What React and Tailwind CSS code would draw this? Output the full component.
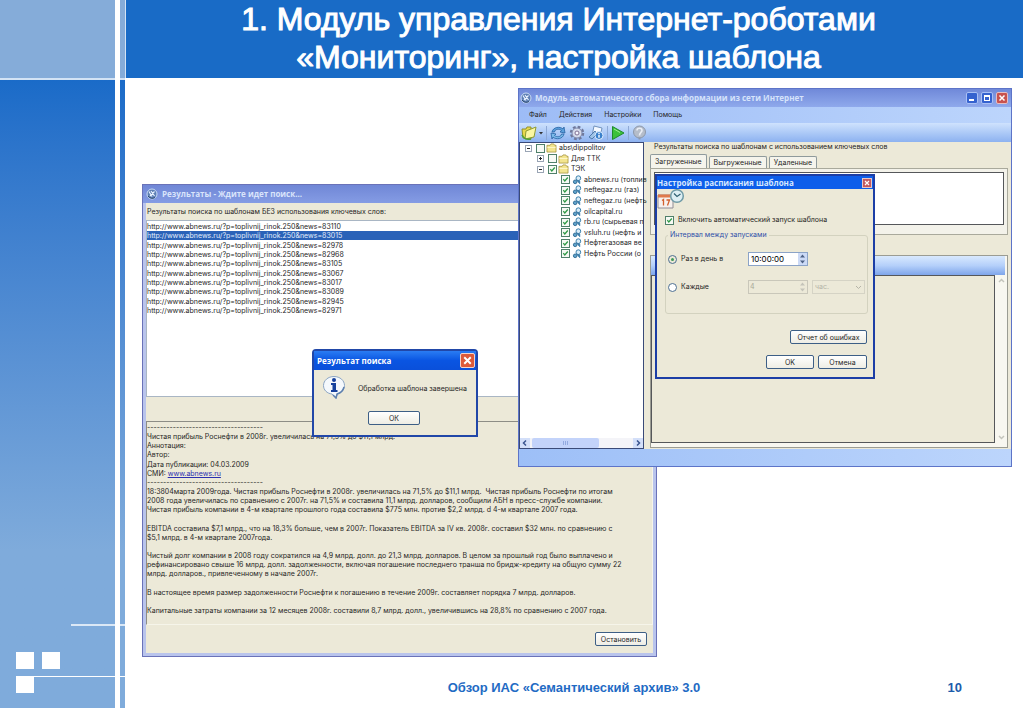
import React from "react";

const NEWS_IDS = ["83110", "83015", "82978", "82968", "83105", "83067", "83017", "83089", "82945", "82971"];

const DASHES = "------------------------------------";

const ARTICLE = [
  DASHES,
  "Чистая прибыль Роснефти в 2008г. увеличилась на 71,5% до $11,1 млрд.",
  "Аннотация:",
  "Автор:",
  "Дата публикации: 04.03.2009",
  { label: "СМИ: ", source: "www.abnews.ru" },
  DASHES,
  "18:3804марта 2009года. Чистая прибыль Роснефти в 2008г. увеличилась на 71,5% до $11,1 млрд.  Чистая прибыль Роснефти по итогам",
  "2008 года увеличилась по сравнению с 2007г. на 71,5% и составила 11,1 млрд. долларов, сообщили АБН в пресс-службе компании.",
  "Чистая прибыль компании в 4-м квартале прошлого года составила $775 млн. против $2,2 млрд. d 4-м квартале 2007 года.",
  "",
  "EBITDA составила $7,1 млрд., что на 18,3% больше, чем в 2007г. Показатель EBITDA за IV кв. 2008г. составил $32 млн. по сравнению с",
  "$5,1 млрд. в 4-м квартале 2007года.",
  "",
  "Чистый долг компании в 2008 году сократился на 4,9 млрд. долл. до 21,3 млрд. долларов. В целом за прошлый год было выплачено и",
  "рефинансировано свыше 16 млрд. долл. задолженности, включая погашение последнего транша по бридж-кредиту на общую сумму 22",
  "млрд. долларов., привлеченному в начале 2007г.",
  "",
  "В настоящее время размер задолженности Роснефти к погашению в течение 2009г. составляет порядка 7 млрд. долларов.",
  "",
  "Капитальные затраты компании за 12 месяцев 2008г. составили 8,7 млрд. долл., увеличившись на 28,8% по сравнению с 2007 года.",
];

const SITES = [
  "abnews.ru (топлив",
  "neftegaz.ru (газ)",
  "neftegaz.ru (нефть",
  "oilcapital.ru",
  "rb.ru (сырьевая п",
  "vsluh.ru (нефть и",
  "Нефтегазовая ве",
  "Нефть России (о",
];

function AppIcon() {
  return (
    <svg viewBox="0 0 12 12" className="size-3 shrink-0" aria-hidden="true">
      <circle cx="6" cy="6" r="5" fill="#5d7fb4" stroke="#c9dcf5" />
      <path d="M3 3.500l3 5M5 3l3.500 5M8.500 3.500L4 8" stroke="#eaf3ff" strokeWidth="1.200" fill="none" />
      <path d="M2 8a5 5 0 0 0 7 1.500" stroke="#29476f" fill="none" />
    </svg>
  );
}

function CloseIcon({ className }) {
  return (
    <svg viewBox="0 0 12 12" className={className} aria-hidden="true">
      <path d="M3 3l6 6M9 3l-6 6" stroke="#fff" strokeWidth="1.800" />
    </svg>
  );
}

function CheckBox({ checked, label }) {
  return (
    <span className="relative block size-[9px] shrink-0">
      <input
        type="checkbox"
        aria-label={label}
        defaultChecked={checked}
        className="peer block size-[9px] appearance-none border border-[#4f806a] bg-[#f7faf5]"
      />
      <svg viewBox="0 0 9 9" className="pointer-events-none absolute inset-0 hidden size-[9px] peer-checked:block" aria-hidden="true">
        <path d="M2.300 4.200l1.500 1.800 3-3.500" stroke="#2f9a46" strokeWidth="1.300" fill="none" />
      </svg>
    </span>
  );
}

function Folder() {
  return (
    <svg viewBox="0 0 12 11" className="h-2.5 w-[11px] shrink-0" aria-hidden="true">
      <path d="M1 2.500h3.500l1-1.500h3l1 1.500h1.500v7.500h-10z" fill="#f3e58f" stroke="#a08d35" strokeWidth=".8" />
      <path d="M1.500 5h9" stroke="#fff8cc" />
    </svg>
  );
}

function Expander({ open }) {
  return (
    <svg viewBox="0 0 7 7" className="mr-[3px] size-[7px] shrink-0" aria-hidden="true">
      <rect x=".5" y=".5" width="6" height="6" fill="#fff" stroke="#9aa5b5" />
      <path d={open ? "M2 3.500h3" : "M2 3.500h3M3.500 2v3"} stroke="#222" />
    </svg>
  );
}

function SiteIcon() {
  return (
    <svg viewBox="0 0 10 11" className="h-2.5 w-2.5 shrink-0" aria-hidden="true">
      <circle cx="6.500" cy="3.500" r="2.600" fill="#d9ecf8" stroke="#2f78a6" />
      <circle cx="3" cy="7.500" r="2" fill="#5fa3cc" stroke="#2a668f" />
      <path d="M5 6l3 3.500v-3z" fill="#3a7ca8" stroke="#3a7ca8" />
    </svg>
  );
}

function ToolIcons() {
  return (
    <>
      <button type="button" aria-label="Открыть" className="flex items-center">
        <svg viewBox="0 0 22 16" className="h-4 w-[22px]" aria-hidden="true">
          <path d="M1 4h4l1-2h4v12l-8-1z" fill="#e8d94c" stroke="#93922b" />
          <path d="M5 6l10-4-2 10-9 2z" fill="#fbf7a2" stroke="#8f9a32" />
          <path d="M1 10c2 4 5 5 9 4" stroke="#4aa23a" strokeWidth="1.500" fill="none" />
          <path d="M18 7h4l-2 2.500z" fill="#333" />
        </svg>
      </button>
      <span className="mx-[3px] h-3.5 w-px bg-[#8ea9d6]" />
      <button type="button" aria-label="Обновить">
        <svg viewBox="0 0 16 16" className="size-4" aria-hidden="true">
          <path d="M2 7c1-5 8-6 11-3l1-2 1 6-5-1 1.500-1.500C9 3.500 5 4 4.500 7z" fill="#5ba0dc" stroke="#2763a4" strokeWidth=".8" />
          <path d="M14 9c-1 5-8 6-11 3l-1 2-1-6 5 1-1.500 1.500c2.500 2 6.500 1.500 7-1.500z" fill="#7bbbe9" stroke="#2763a4" strokeWidth=".8" />
        </svg>
      </button>
      <button type="button" aria-label="Параметры" className="ml-[3px]">
        <svg viewBox="0 0 16 16" className="size-4" aria-hidden="true">
          <circle cx="8" cy="8" r="6" fill="none" stroke="#6f789b" strokeWidth="2.500" strokeDasharray="2.700 2" />
          <circle cx="8" cy="8" r="5" fill="#d5daea" stroke="#7d86a8" />
          <circle cx="8" cy="8" r="2" fill="#f7f8ff" stroke="#806e92" />
        </svg>
      </button>
      <button type="button" aria-label="Сведения" className="ml-[3px]">
        <svg viewBox="0 0 16 16" className="size-4" aria-hidden="true">
          <path d="M6 1l8 2-2 9-8-1z" fill="#f4f9ff" stroke="#7192bd" />
          <path d="M1 12l6-6 2 3-5 5z" fill="#9fc3e7" stroke="#4f7bab" />
          <circle cx="11" cy="10.500" r="4" fill="#3a80cb" stroke="#e0efff" />
          <path d="M11 9.800v3M11 7.800v1.200" stroke="#fff" strokeWidth="1.400" />
        </svg>
      </button>
      <span className="mx-[3px] h-3.5 w-px bg-[#8ea9d6]" />
      <button type="button" aria-label="Запуск">
        <svg viewBox="0 0 14 16" className="h-4 w-3.5" aria-hidden="true">
          <path d="M1.500 1.500L13 8 1.500 14.500z" fill="#3cc13c" stroke="#1f8a2c" />
          <path d="M3 4l6 3.500" stroke="#9bee8f" />
        </svg>
      </button>
      <span className="mx-[3px] h-3.5 w-px bg-[#8ea9d6]" />
      <button type="button" aria-label="Остановка">
        <svg viewBox="0 0 15 16" className="h-4 w-[15px]" aria-hidden="true">
          <circle cx="7.500" cy="7" r="6" fill="#b5bdca" stroke="#8d98aa" />
          <path d="M5 5.500c0-3 5-3 5 0 0 2-2.500 2-2.500 5" stroke="#e9edf4" strokeWidth="1.600" fill="none" />
          <path d="M6.500 12.500h2v2h-2z" fill="#8d98aa" />
        </svg>
      </button>
    </>
  );
}

function PushButton({ children, className }) {
  return (
    <button
      type="button"
      className={
        "h-3.5 rounded-[2px] border border-[#3d5f86] bg-gradient-to-b from-white to-[#eeede4] text-[7px] leading-[11px] whitespace-nowrap " +
        className
      }
    >
      {children}
    </button>
  );
}

function ResultsWindow() {
  return (
    <section className="absolute top-[106px] left-[17px] flex h-[473px] w-[515px] flex-col border border-[#6a72b8] bg-[#b9c4ec] px-[3px] pb-[3px]">
      <h2 className="-mx-[3px] flex h-[18px] items-center gap-1 bg-gradient-to-b from-[#7087d6] to-[#859ce4] px-[3px] font-['Open_Sans',sans-serif] text-[8px] font-bold text-[#d9e4fb]">
        <AppIcon />
        Результаты - Ждите идет поиск...
      </h2>
      <div className="flex flex-1 flex-col bg-[#ece9d8]">
        <p className="h-[17px] pl-px text-[7px] leading-[18px]">
          Результаты поиска по шаблонам БЕЗ использования ключевых слов:
        </p>
        <div className="h-[177px] border border-[#a9b6c4] bg-white pt-px">
          <ul className="flex h-[93px] flex-col justify-between">
            {NEWS_IDS.map((id, i) => (
              <li
                key={id}
                className={
                  i === 1
                    ? "h-[9px] bg-[#2a62b8] text-[7px] leading-[9px] text-[#e3edfb]"
                    : "h-[9px] text-[7px] leading-[9px]"
                }
              >
                http://www.abnews.ru/?p=toplivnij_rinok.250&amp;news={id}
              </li>
            ))}
          </ul>
        </div>
        <article className="mt-6 h-[204px] border border-t-[#8d8d86] border-r-[#f6f5ea] border-b-[#f6f5ea] border-l-[#8d8d86] pt-px">
          <div className="flex h-[192px] flex-col justify-between">
            {ARTICLE.map((line, i) => (
              <p key={i} className="h-[9px] text-[7px] leading-[9px] whitespace-pre">
                {typeof line === "string" ? (
                  line
                ) : (
                  <>
                    {line.label}
                    <a href="#abnews" className="text-[#2b2fb0] underline">
                      {line.source}
                    </a>
                  </>
                )}
              </p>
            ))}
          </div>
        </article>
        <div className="flex flex-1 items-center justify-end pr-1.5">
          <PushButton className="w-[52px]">Остановить</PushButton>
        </div>
      </div>
    </section>
  );
}

function MessageDialog() {
  return (
    <section className="absolute top-[271px] left-[187px] flex h-[88px] w-[166px] flex-col rounded-t-[4px] border-2 border-[#2147a8] bg-[#ece9d8]">
      <h2 className="flex h-[19px] items-center justify-between bg-gradient-to-b from-[#2a7cf3] via-[#0a55e2] to-[#0a50da] pr-px pl-[3px] font-['Open_Sans',sans-serif] text-[8px] font-bold text-white">
        Результат поиска
        <button type="button" aria-label="Закрыть" className="rounded-[2px] border border-[#f3d4cc] bg-[#dd5a3a]">
          <CloseIcon className="size-[13px]" />
        </button>
      </h2>
      <div className="flex items-center gap-3 pt-[5px] pl-2">
        <svg viewBox="0 0 24 24" className="size-6 shrink-0" aria-hidden="true">
          <path d="M12 1.500c6 0 10.500 4 10.500 9 0 4-3 7.500-7 8.500L14 23l-4-4C5 18.500 1.500 15 1.500 10.500c0-5 4.500-9 10.500-9z" fill="#f4f8fc" stroke="#8ba5c4" />
          <path d="M22 12c-1 4-3 6-7 7l-1 4-3-3" stroke="#5c7fae" strokeWidth="1.500" fill="none" />
          <circle cx="12" cy="5" r="2" fill="#16409c" />
          <path d="M9 8h5v7h1.500v2H9v-2h1.500v-5H9z" fill="#16409c" />
        </svg>
        <p className="pt-1 text-[7px] leading-[10px] whitespace-nowrap">Обработка шаблона завершена</p>
      </div>
      <PushButton className="mt-3 ml-[54px] w-[52px]">ОК</PushButton>
    </section>
  );
}

function MonitorWindow() {
  return (
    <section className="absolute top-[10px] left-[393px] flex h-[379px] w-[494px] flex-col border border-[#5d74c8] bg-[#a9c6fa]">
      <h2 className="flex h-[18px] shrink-0 items-center gap-[3px] bg-gradient-to-b from-[#7089d9] to-[#8fa9ec] pr-[3px] pl-px font-['Open_Sans',sans-serif] text-[8px] font-bold text-[#d6e3fb]">
        <AppIcon />
        <span className="flex-1">Модуль автоматического сбора информации из сети Интернет</span>
        <button type="button" aria-label="Свернуть" className="flex size-3 items-end rounded-[2px] border border-[#a9c0f5] bg-[#3562cf] p-[2px]">
          <span className="h-[2px] w-[5px] bg-white" />
        </button>
        <button type="button" aria-label="Развернуть" className="size-3 rounded-[2px] border border-[#a9c0f5] bg-[#3562cf] p-[2px]">
          <span className="block size-[6px] border border-t-2 border-white" />
        </button>
        <button type="button" aria-label="Закрыть" className="size-3 rounded-[2px] border border-[#e7bdc0] bg-[#c8524f]">
          <CloseIcon className="size-2.5" />
        </button>
      </h2>
      <nav className="flex h-4 shrink-0 items-center gap-3 bg-gradient-to-r from-[#9dbcf6] to-[#bcd5fc] pl-2.5 text-[7px]">
        <button type="button">Файл</button>
        <button type="button">Действия</button>
        <button type="button">Настройки</button>
        <button type="button">Помощь</button>
      </nav>
      <div className="flex h-[19px] shrink-0 items-center bg-gradient-to-b from-[#cfe2fd] to-[#8db2f0] pl-[2px]">
        <ToolIcons />
      </div>
      <div className="flex min-h-0 flex-1 bg-[#ece9d8]">
        <div className="flex w-[125px] shrink-0 flex-col justify-between border border-[#3a4a78] bg-white text-[7px] leading-[10px] whitespace-nowrap">
          <ul className="flex h-[116px] flex-col justify-between">
            <li className="flex h-2.5 items-center gap-px pl-[5px]">
              <Expander open />
              <CheckBox label="abs\dippolitov" />
              <Folder />
              <span className="ml-px">abs\dippolitov</span>
            </li>
            <li className="flex h-2.5 items-center gap-px pl-[17px]">
              <Expander />
              <CheckBox label="Для ТТК" />
              <Folder />
              <span className="ml-px">Для ТТК</span>
            </li>
            <li className="flex h-2.5 items-center gap-px pl-[17px]">
              <Expander open />
              <CheckBox checked label="ТЭК" />
              <Folder />
              <span className="ml-px">ТЭК</span>
            </li>
            {SITES.map((site) => (
              <li key={site} className="flex h-2.5 items-center gap-[2px] pl-[41px]">
                <CheckBox checked label={site} />
                <SiteIcon />
                <span>{site}</span>
              </li>
            ))}
          </ul>
          <div className="flex h-2.5 items-center bg-[#f4f4f8]">
            <svg viewBox="0 0 10 10" className="size-2.5 bg-[#d3dff9]" aria-hidden="true">
              <path d="M6 2.500L3.500 5 6 7.500" stroke="#3b5590" strokeWidth="1.500" fill="none" />
            </svg>
            <span className="ml-[2px] flex h-2.5 w-[67px] items-center justify-center gap-px rounded-[2px] bg-[#c3d3fa]">
              <i className="h-1 w-px bg-[#93aae0]" />
              <i className="h-1 w-px bg-[#93aae0]" />
              <i className="h-1 w-px bg-[#93aae0]" />
            </span>
            <span className="flex-1" />
            <svg viewBox="0 0 10 10" className="size-2.5 bg-[#d3dff9]" aria-hidden="true">
              <path d="M4 2.500L6.500 5 4 7.500" stroke="#3b5590" strokeWidth="1.500" fill="none" />
            </svg>
          </div>
        </div>
        <div className="flex flex-1 flex-col pr-[3px] pl-1.5 text-[7px]">
          <p className="h-3 pl-1 leading-[10px]">Результаты поиска по шаблонам с использованием ключевых слов</p>
          <div className="flex h-3.5 items-end gap-[2px] leading-[11px]">
            <button type="button" className="h-3.5 rounded-t-[2px] border border-b-0 border-[#8f9a9c] bg-[#f5f4ec] px-1">Загруженные</button>
            <button type="button" className="h-3 rounded-t-[2px] border border-b-0 border-[#8f9a9c] bg-[#f5f4ec] px-1">Выгруженные</button>
            <button type="button" className="h-3 rounded-t-[2px] border border-b-0 border-[#8f9a9c] bg-[#f5f4ec] px-1">Удаленные</button>
          </div>
          <div className="h-[67px] border border-[#a9a99c] bg-[#f3f2ea] px-[3px] pt-[3px]">
            <div className="h-[53px] border border-[#55575a] bg-white" />
          </div>
          <div className="mt-5 mb-px flex min-h-0 flex-1 flex-col border border-[#9b9c93] bg-[#f8f7f0]">
            <div className="mr-[2px] h-[19px] shrink-0 bg-gradient-to-b from-[#d9e9fe] via-[#b5d0fa] to-[#7fa5ea]" />
            <div className="flex min-h-0 flex-1 pb-1">
              <div className="flex-1 border border-[#55575a] bg-[#ece9d8]" />
              <div className="flex w-3 flex-col items-center justify-between py-px text-[#c4c5bd]">
                <svg viewBox="0 0 9 9" className="size-[9px]" aria-hidden="true">
                  <path d="M2 6l2.500-2.500L7 6" stroke="currentColor" strokeWidth="1.500" fill="none" />
                </svg>
                <svg viewBox="0 0 9 9" className="size-[9px]" aria-hidden="true">
                  <path d="M2 3l2.500 2.500L7 3" stroke="currentColor" strokeWidth="1.500" fill="none" />
                </svg>
              </div>
            </div>
          </div>
        </div>
      </div>
      <div className="h-[17px] shrink-0 bg-gradient-to-r from-[#9dbff7] to-[#bcd5fc]" />
    </section>
  );
}

function Spinner() {
  return (
    <svg viewBox="0 0 9 12" className="h-3 w-[9px] bg-[#ccdaf6]" aria-hidden="true">
      <path d="M2 4.500l2.500-3 2.500 3zM2 7.500l2.500 3 2.500-3z" fill="currentColor" />
    </svg>
  );
}

function ScheduleDialog() {
  return (
    <section className="absolute top-[96px] left-[530px] flex h-[205px] w-[220px] flex-col border-2 border-[#1c3ea6] bg-[#ece9d8] text-[7px]">
      <h2 className="flex h-[13px] shrink-0 items-center justify-between bg-[#0d5eea] pr-px font-['Open_Sans',sans-serif] text-[8px] font-bold text-[#d5e8ff]">
        Настройка расписания шаблона
        <button type="button" aria-label="Закрыть" className="border border-[#e8c6c6] bg-[#c35a60]">
          <CloseIcon className="size-2" />
        </button>
      </h2>
      <svg viewBox="0 0 28 21" className="h-[21px] w-7 shrink-0" aria-hidden="true">
        <path d="M1 6h15v13H1z" fill="#f7f1ee" stroke="#8f8c95" />
        <path d="M1 5.500h15v3H1z" fill="#e0794b" />
        <path d="M5 11.500l1.500-1v6M9.500 11h3l-2 5.500" stroke="#d2602f" strokeWidth="1.300" fill="none" />
        <circle cx="20" cy="7" r="6.300" fill="#dceef3" stroke="#6f9aa6" strokeWidth="1.500" />
        <path d="M17 4.500l3 3 3.500-2.500" stroke="#2f6070" strokeWidth="1.200" fill="none" />
      </svg>
      <div className="flex flex-1 flex-col pr-1.5 pl-2">
        <label className="mt-1 flex h-3 items-center gap-1">
          <CheckBox checked label="Включить автоматический запуск шаблона" />
          Включить автоматический запуск шаблона
        </label>
        <fieldset className="mt-1 h-[84px] rounded-[3px] border border-[#d3d2bf] px-[2px]">
          <legend className="px-[2px] text-[7px] leading-[10px] text-[#2f4fa8]">Интервал между запусками</legend>
          <div className="mt-3 flex h-3.5 items-center">
            <label className="flex w-20 items-center gap-1">
              <input type="radio" name="mode" defaultChecked className="size-[9px] appearance-none rounded-full border border-[#4d6f92] bg-white p-[2px] checked:bg-[#3f9a58] checked:bg-clip-content" />
              Раз в день в
            </label>
            <span className="flex h-3.5 w-[60px] items-center border border-[#8ba3c7] bg-white text-[#4d6185]">
              <input aria-label="Время запуска" defaultValue="10:00:00" className="min-w-0 flex-1 pl-[2px] text-[8px] leading-3 text-black" />
              <Spinner />
            </span>
          </div>
          <div className="mt-3.5 flex h-3.5 items-center">
            <label className="flex w-20 items-center gap-1">
              <input type="radio" name="mode" className="size-[9px] appearance-none rounded-full border border-[#4d6f92] bg-white p-[2px] checked:bg-[#3f9a58] checked:bg-clip-content" />
              Каждые
            </label>
            <span className="flex h-3.5 w-[60px] items-center border border-[#c9c7ba] text-[#c4c3b9]">
              <input aria-label="Интервал" disabled defaultValue="4" className="min-w-0 flex-1 pl-px text-[7px] leading-3 text-[#a9a899]" />
              <svg viewBox="0 0 9 12" className="h-3 w-[9px]" aria-hidden="true">
                <path d="M2 4.500l2.500-3 2.500 3zM2 7.500l2.500 3 2.500-3z" fill="currentColor" />
              </svg>
            </span>
            <span className="relative ml-1 block text-[#b5b4a7]">
              <select aria-label="Единица интервала" disabled className="block h-3.5 w-[53px] appearance-none border border-[#d5d3c5] pl-[2px] text-[7px] leading-3 opacity-100">
                <option>час.</option>
              </select>
              <svg viewBox="0 0 9 9" className="pointer-events-none absolute top-[3px] right-[2px] size-[9px]" aria-hidden="true">
                <path d="M2 3l2.500 2.500L7 3" stroke="currentColor" fill="none" />
              </svg>
            </span>
          </div>
        </fieldset>
        <div className="mt-4 flex justify-end">
          <PushButton className="w-[77px]">Отчет об ошибках</PushButton>
        </div>
        <div className="mt-[11px] flex justify-end gap-1">
          <PushButton className="w-12 border-[#2b4fa0]">OK</PushButton>
          <PushButton className="w-[49px]">Отмена</PushButton>
        </div>
      </div>
    </section>
  );
}

export default function App() {
  return (
    <div className="flex min-h-screen bg-white font-['Liberation_Sans',Arial,sans-serif] text-black">
      <aside className="relative flex w-[125px] shrink-0 flex-col">
        <div className="h-[78px] bg-[#85acd9]" />
        <div className="h-[2px] bg-[#d3e3f5]" />
        <div className="flex flex-1 flex-col justify-end bg-gradient-to-b from-[#1a6bc8] to-[#7fabdb] to-75% pb-[15px]">
          <div className="ml-[71px] h-[2px] bg-[#dbe8f6]" />
          <div className="mt-[26px] ml-4 flex gap-2">
            <span className="h-[17px] w-[18px] bg-white" />
            <span className="h-[17px] w-[18px] bg-white" />
          </div>
          <div className="mt-[7px] ml-4 flex">
            <span className="h-[17px] w-[18px] bg-white" />
            <span className="h-px flex-1 bg-white" />
          </div>
        </div>
        <div className="absolute inset-y-0 left-[115px] w-[5px] bg-white" />
      </aside>
      <div className="flex min-w-0 flex-1 flex-col">
        <header className="flex h-[78px] items-start justify-center border-l border-[#d3e3f5] bg-[#196bc6]">
          <h1 className="-ml-8 text-center text-[32px] leading-[38px] text-white [-webkit-text-stroke:1px_white]">
            1. Модуль управления Интернет-роботами
            <br />
            «Мониторинг», настройка шаблона
          </h1>
        </header>
        <main className="relative min-h-[589px] flex-1 font-['Inter',sans-serif] text-[#26261f]">
          <ResultsWindow />
          <MessageDialog />
          <MonitorWindow />
          <ScheduleDialog />
        </main>
        <footer className="grid h-[41px] grid-cols-[1fr_auto_1fr] items-center text-[13px] font-bold text-[#1f6bc4]">
          <span />
          <span>Обзор ИАС «Семантический архив» 3.0</span>
          <span className="pr-[61px] text-right text-[#1c5cab]">10</span>
        </footer>
      </div>
    </div>
  );
}
